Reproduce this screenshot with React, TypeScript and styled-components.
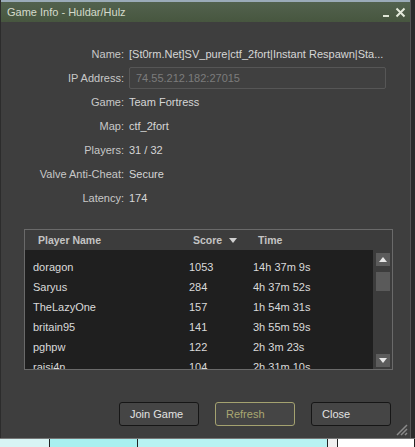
import React from "react"
import styled, { createGlobalStyle } from "styled-components"

const Global = createGlobalStyle`
    html, body {
        margin: 0;
        padding: 0;
        background: #2a2a2a;
        overflow: hidden;
    }
    * { box-sizing: border-box; }
`

const Page = styled.div`
    width: 415px;
    height: 447px;
    display: flex;
    flex-direction: column;
    font-family: "Liberation Sans", Arial, sans-serif;
    font-size: 11px;
`

const Window = styled.div`
    width: 411px;
    height: 438px;
    display: flex;
    flex-direction: column;
    background: #3e3e3e;
    border-left: 1px solid #2c2c2c;
    border-right: 1px solid #555;
    position: relative;
`

const TopEdge = styled.div`
    height: 2px;
    background: #9aabb8;
`

const TitleBar = styled.div`
    height: 20px;
    display: flex;
    align-items: center;
    justify-content: space-between;
    padding: 0 4px 0 6px;
    background: linear-gradient(#52624e, #47563f);
    color: #d4dacb;
    font-size: 11px;
`

const TitleControls = styled.div`
    display: flex;
    align-items: center;
    gap: 5px;
`

const Content = styled.div`
    flex: 1;
    display: flex;
    flex-direction: column;
    padding: 20px 19px 0 23px;
`

const InfoGrid = styled.div`
    display: grid;
    grid-template-columns: 100px 1fr;
    grid-auto-rows: 24px;
    column-gap: 5px;
    align-items: center;
    margin-right: 3px;
`

const Label = styled.div`
    text-align: right;
    color: #c8c8c8;
    white-space: nowrap;
`

const Value = styled.div`
    color: #d6d6d6;
    white-space: nowrap;
`

const Field = styled.div`
    height: 22px;
    display: flex;
    align-items: center;
    padding-left: 6px;
    border: 1px solid #565656;
    border-radius: 2px;
    background: #404040;
    color: #7c7c7c;
    margin-right: 2px;
`

const Table = styled.div`
    margin-top: 19px;
    width: 369px;
    height: 141px;
    border: 1px solid #6a6a6a;
    background: #3c3c3c;
    display: flex;
    flex-direction: column;
`

const HeaderRow = styled.div`
    height: 20px;
    display: grid;
    grid-template-columns: 155px 65px 1fr;
    align-items: center;
    padding-left: 13px;
    color: #c4c4c4;
    font-weight: bold;
    font-size: 10.5px;
`

const HeaderCell = styled.div`
    display: flex;
    align-items: center;
    gap: 7px;
`

const TableBody = styled.div`
    flex: 1;
    display: flex;
    min-height: 0;
`

const List = styled.div`
    flex: 1;
    background: #1f1f1f;
    overflow: hidden;
    padding-top: 7px;
`

const Row = styled.div`
    height: 20px;
    display: grid;
    grid-template-columns: 156px 64px 1fr;
    align-items: center;
    padding-left: 8px;
    color: #dadada;
`

const Scrollbar = styled.div`
    width: 19px;
    display: flex;
    flex-direction: column;
    align-items: center;
    padding: 3px 0 2px;
`

const ScrollButton = styled.div`
    width: 14px;
    height: 13px;
    background: #5c5c5c;
    display: flex;
    align-items: center;
    justify-content: center;
`

const Thumb = styled.div`
    width: 14px;
    height: 19px;
    margin-top: 6px;
    background: #5a5a5a;
`

const Track = styled.div`
    flex: 1;
`

const ButtonBar = styled.div`
    margin-top: 32px;
    display: flex;
    justify-content: flex-end;
    gap: 16px;
`

const Button = styled.div<{ $active?: boolean }>`
    width: 80px;
    height: 24px;
    display: flex;
    align-items: center;
    padding-left: 10px;
    border-radius: 3px;
    background: #454545;
    border: 1px solid ${(p) => (p.$active ? "#a4a270" : "#161616")};
    color: ${(p) => (p.$active ? "#aaa872" : "#e2e2e2")};
`

const Grip = styled.svg`
    position: absolute;
    right: 2px;
    bottom: 2px;
`

const Taskbar = styled.div`
    height: 9px;
    display: flex;
    border-top: 1px solid #777;
`

const TaskSegment = styled.div<{ $w: number; $bg: string }>`
    width: ${(p) => p.$w}px;
    background: ${(p) => p.$bg};
    border-right: 1px solid #222;
`

const players = [
    ["doragon", "1053", "14h 37m 9s"],
    ["Saryus", "284", "4h 37m 52s"],
    ["TheLazyOne", "157", "1h 54m 31s"],
    ["britain95", "141", "3h 55m 59s"],
    ["pghpw", "122", "2h 3m 23s"],
    ["raisi4n", "104", "2h 31m 10s"],
]

const info: [string, string][] = [
    ["Name:", "[St0rm.Net]SV_pure|ctf_2fort|Instant Respawn|Sta..."],
    ["IP Address:", "74.55.212.182:27015"],
    ["Game:", "Team Fortress"],
    ["Map:", "ctf_2fort"],
    ["Players:", "31 / 32"],
    ["Valve Anti-Cheat:", "Secure"],
    ["Latency:", "174"],
]

const App = () => {
    return (
        <Page>
            <Global />
            <Window>
                <TopEdge />
                <TitleBar>
                    <span>Game Info - Huldar/Hulz</span>
                    <TitleControls>
                        <svg width="8" height="12" viewBox="0 0 8 12">
                            <rect x="1" y="9" width="6" height="2" fill="#dfe5d6" />
                        </svg>
                        <svg width="11" height="11" viewBox="0 0 11 11">
                            <path d="M1.5 1.5 L9.5 9.5 M9.5 1.5 L1.5 9.5" stroke="#e4eadb" strokeWidth="2" />
                        </svg>
                    </TitleControls>
                </TitleBar>
                <Content>
                    <InfoGrid>
                        {info.map(([k, v]) => (
                            <React.Fragment key={k}>
                                <Label>{k}</Label>
                                {k === "IP Address:" ? <Field>{v}</Field> : <Value>{v}</Value>}
                            </React.Fragment>
                        ))}
                    </InfoGrid>
                    <Table>
                        <HeaderRow>
                            <HeaderCell>Player Name</HeaderCell>
                            <HeaderCell>
                                Score
                                <svg width="8" height="5" viewBox="0 0 8 5">
                                    <path d="M0 0 H8 L4 5 Z" fill="#d0d0d0" />
                                </svg>
                            </HeaderCell>
                            <HeaderCell>Time</HeaderCell>
                        </HeaderRow>
                        <TableBody>
                            <List>
                                {players.map((p) => (
                                    <Row key={p[0]}>
                                        <span>{p[0]}</span>
                                        <span>{p[1]}</span>
                                        <span>{p[2]}</span>
                                    </Row>
                                ))}
                            </List>
                            <Scrollbar>
                                <ScrollButton>
                                    <svg width="8" height="5" viewBox="0 0 8 5">
                                        <path d="M0 5 H8 L4 0 Z" fill="#e8e8e8" />
                                    </svg>
                                </ScrollButton>
                                <Thumb />
                                <Track />
                                <ScrollButton>
                                    <svg width="8" height="5" viewBox="0 0 8 5">
                                        <path d="M0 0 H8 L4 5 Z" fill="#e8e8e8" />
                                    </svg>
                                </ScrollButton>
                            </Scrollbar>
                        </TableBody>
                    </Table>
                    <ButtonBar>
                        <Button>Join Game</Button>
                        <Button $active>Refresh</Button>
                        <Button>Close</Button>
                    </ButtonBar>
                </Content>
                <Grip width="14" height="14" viewBox="0 0 14 14">
                    <path d="M13 3 L3 13 M13 7 L7 13 M13 11 L11 13" stroke="#8a8a8a" strokeWidth="1.5" />
                </Grip>
            </Window>
            <Taskbar>
                <TaskSegment $w={50} $bg="#d8f4f4" />
                <TaskSegment $w={88} $bg="#a8f0f0" />
                <TaskSegment $w={190} $bg="#b8f2f2" />
                <TaskSegment $w={10} $bg="#f0f0f0" />
                <TaskSegment $w={77} $bg="#ffffff" />
            </Taskbar>
        </Page>
    )
}

export default App
